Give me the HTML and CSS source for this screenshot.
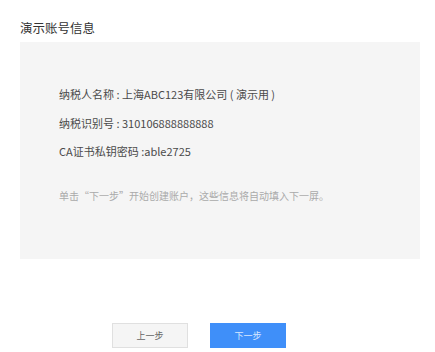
FILE: index.html
```html
<!DOCTYPE html>
<html lang="zh">
<head>
<meta charset="utf-8">
<link rel="stylesheet" href="styles.css">
</head>
<body>
<div class="page">
  <h2 class="title">演示账号信息</h2>
  <div class="panel">
    <p class="row">纳税人名称 : 上海ABC123有限公司 ( 演示用 )</p>
    <p class="row">纳税识别号 : 310106888888888</p>
    <p class="row">CA证书私钥密码 :able2725</p>
    <p class="hint">单击“下一步”开始创建账户，这些信息将自动填入下一屏。</p>
  </div>
  <div class="actions">
    <button class="btn btn-prev">上一步</button>
    <button class="btn btn-next">下一步</button>
  </div>
</div>
</body>
</html>
```
FILE: styles.css
```css
html, body {
  margin: 0;
  padding: 0;
  background: #fff;
}
body {
  font-family: "Noto Sans CJK SC", "Open Sans", sans-serif;
  color: #333;
}
.page {
  padding: 20px 15px 0 20px;
}
.title {
  margin: 0;
  font-size: 12.5px;
  font-weight: normal;
  line-height: 16px;
  color: #333;
}
.panel {
  margin-top: 6px;
  background: #f5f5f5;
  height: 217px;
  box-sizing: border-box;
  padding: 44px 0 0 39px;
}
.row {
  margin: 0 0 11.5px;
  font-size: 11px;
  line-height: 17px;
  color: #4a4a4a;
}
.hint {
  margin: 27px 0 0;
  font-size: 10px;
  line-height: 17px;
  color: #aaa;
}
.actions {
  display: flex;
  gap: 22px;
  margin-top: 64px;
  padding-left: 92px;
}
.btn {
  width: 76px;
  height: 25px;
  font-family: inherit;
  font-size: 9px;
  border-radius: 0;
  padding: 0;
}
.btn-prev {
  background: #f5f5f5;
  border: 1px solid #e0e0e0;
  color: #666;
}
.btn-next {
  background: #3f8ff9;
  border: 1px solid #3f8ff9;
  color: #d8e8ff;
}
```
